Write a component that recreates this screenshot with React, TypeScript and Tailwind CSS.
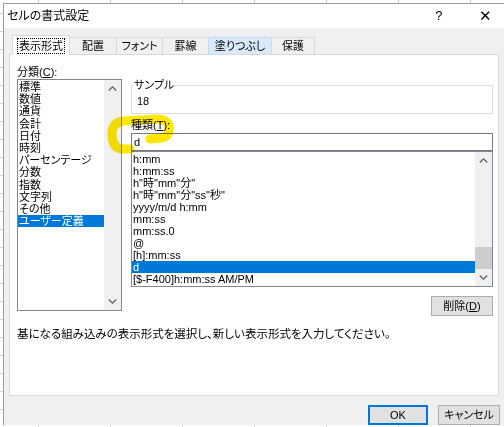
import React from 'react';

const categories = ['標準', '数値', '通貨', '会計', '日付', '時刻', 'パーセンテージ', '分数', '指数', '文字列', 'その他', 'ユーザー定義'];

const formats = [
  'h:mm',
  'h:mm:ss',
  'h"時"mm"分"',
  'h"時"mm"分"ss"秒"',
  'yyyy/m/d h:mm',
  'mm:ss',
  'mm:ss.0',
  '@',
  '[h]:mm:ss',
  'd',
  '[$-F400]h:mm:ss AM/PM',
];

const Up = () => (
  <svg width="9" height="5" viewBox="0 0 9 5">
    <path d="M0.8 4.5 L4.5 0.9 L8.2 4.5" fill="none" stroke="#606060" strokeWidth="1.3" />
  </svg>
);

const Down = () => (
  <svg width="9" height="5" viewBox="0 0 9 5">
    <path d="M0.8 0.5 L4.5 4.1 L8.2 0.5" fill="none" stroke="#606060" strokeWidth="1.3" />
  </svg>
);

const tabs = [
  { label: '配置', w: 'w-[48px]' },
  { label: 'フォント', w: 'w-[47px]' },
  { label: '罫線', w: 'w-[47px]' },
  { label: '塗りつぶし', w: 'w-[64px]', hover: true },
  { label: '保護', w: 'w-[44px]' },
];

export default function App() {
  return (
    <div className="relative h-[427px] w-[504px] overflow-hidden bg-white bg-[linear-gradient(90deg,#d4d4d4_1px,transparent_1px),linear-gradient(#d4d4d4_1px,transparent_1px)] bg-[size:72px_18px] bg-[position:38px_13px] pl-[3px] pt-[3px] font-['Liberation_Sans','Noto_Sans_CJK_JP',sans-serif] text-[11px] leading-[12px] text-black [font-feature-settings:'palt']">
      <div className="w-[530px] border-l border-t border-[#9a9a9a] bg-[#f0f0f0]">
        {/* title bar */}
        <div className="flex h-[24px] items-center bg-white pl-[3px] text-[12px]">
          <span>セルの書式設定</span>
          <span className="ml-[346px] text-[13px]">?</span>
          <span className="ml-[37px] text-[15px] font-light">✕</span>
        </div>

        <div className="pl-[5px] pt-[7px]">
          {/* tabs */}
          <div className="flex h-[19px] items-end pl-[3px]">
            <div className="relative z-10 -mb-px flex h-[20px] w-[58px] items-center justify-center border border-b-0 border-[#d9d9d9] bg-white">
              <span className="border border-dotted border-black px-[1px] py-[1px]">表示形式</span>
            </div>
            {tabs.map((t) => (
              <div
                key={t.label}
                className={`-ml-px flex h-[17px] items-center justify-center border border-b-0 ${t.w} ${
                  t.hover ? 'border-[#c4ddf2] bg-[#d8eaf9]' : 'border-[#d9d9d9] bg-[#f0f0f0]'
                }`}
              >
                {t.label}
              </div>
            ))}
          </div>

          {/* panel */}
          <div className="flex h-[342px] w-[490px] flex-col border border-[#d9d9d9] bg-white">
            <div className="flex items-start gap-[9px] pl-[7px]">
              {/* category column */}
              <div className="flex flex-col pt-[11px]">
                <div>
                  分類(<span className="underline underline-offset-1">C</span>):
                </div>
                <div className="mt-[1px] flex h-[232px] w-[105px] border border-[#828790] bg-white">
                  <div className="flex flex-1 flex-col pt-[1px]">
                    {categories.map((c, i) => (
                      <div
                        key={c}
                        className={`h-[12.2px] pl-[1px] leading-[12px] ${
                          i === categories.length - 1 ? 'bg-[#0078d7] text-white' : ''
                        }`}
                      >
                        {c}
                      </div>
                    ))}
                  </div>
                  <div className="flex w-[17px] flex-col justify-between bg-[#f0f0f0]">
                    <div className="flex h-[17px] items-center justify-center">
                      <Up />
                    </div>
                    <div className="flex h-[17px] items-center justify-center">
                      <Down />
                    </div>
                  </div>
                </div>
              </div>

              {/* right column */}
              <div className="flex w-[362px] flex-col pt-[30px]">
                <div className="relative h-[29px] border border-[#dcdcdc] pl-[5px] pt-[9px]">
                  <span className="absolute -top-[7px] left-[1px] bg-white px-[1px]">サンプル</span>
                  18
                </div>
                <div className="mt-[5px]">
                  種類(<span className="underline underline-offset-1">T</span>):
                </div>
                <div className="mt-[2px] flex h-[18px] items-center border border-[#7a7a7a] bg-white pl-[2px]">d</div>
                <div className="flex h-[136px] border border-[#828790] bg-white">
                  <div className="flex flex-1 flex-col pt-[1px]">
                    {formats.map((f) => (
                      <div
                        key={f}
                        className={`h-[12px] whitespace-pre pl-[1px] leading-[12px] ${
                          f === 'd' ? 'bg-[#0078d7] text-white' : ''
                        }`}
                      >
                        {f}
                      </div>
                    ))}
                  </div>
                  <div className="flex w-[17px] flex-col bg-[#f0f0f0]">
                    <div className="flex h-[17px] items-center justify-center">
                      <Up />
                    </div>
                    <div className="flex flex-1 flex-col justify-end">
                      <div className="h-[22px] bg-[#cdcdcd]" />
                    </div>
                    <div className="flex h-[17px] items-center justify-center">
                      <Down />
                    </div>
                  </div>
                </div>
                <div className="mt-[9px] flex justify-end">
                  <button className="flex h-[20px] w-[62px] items-center justify-center border border-[#adadad] bg-[#e1e1e1]">
                    削除(<span className="underline underline-offset-1">D</span>)
                  </button>
                </div>
              </div>
            </div>

            <div className="mt-[12px] pl-[7px] text-[11.5px]">
              基になる組み込みの表示形式を選択し、新しい表示形式を入力してください。
            </div>
          </div>

          {/* footer buttons */}
          <div className="flex gap-[10px] pl-[359px] pt-[9px]">
            <button className="flex h-[20px] w-[60px] items-center justify-center border-2 border-[#0078d7] bg-[#e1e1e1]">
              OK
            </button>
            <button className="flex h-[20px] w-[62px] items-center justify-center border border-[#adadad] bg-[#e1e1e1]">
              キャンセル
            </button>
          </div>
        </div>
      </div>

      {/* highlighter annotation drawn over the dialog */}
      <svg
        className="pointer-events-none absolute left-0 top-0 z-20 mix-blend-multiply"
        width="504"
        height="427"
        viewBox="0 0 504 427"
      >
        <path
          d="M150 139 L162 138 Q170 136 169 127 Q168 119 156 119 L124 121 Q112 122 112 134 Q112 148 122 149 L130 149"
          fill="none"
          stroke="#ffe800"
          strokeWidth="9"
          strokeLinecap="round"
          strokeLinejoin="round"
        />
      </svg>
    </div>
  );
}
